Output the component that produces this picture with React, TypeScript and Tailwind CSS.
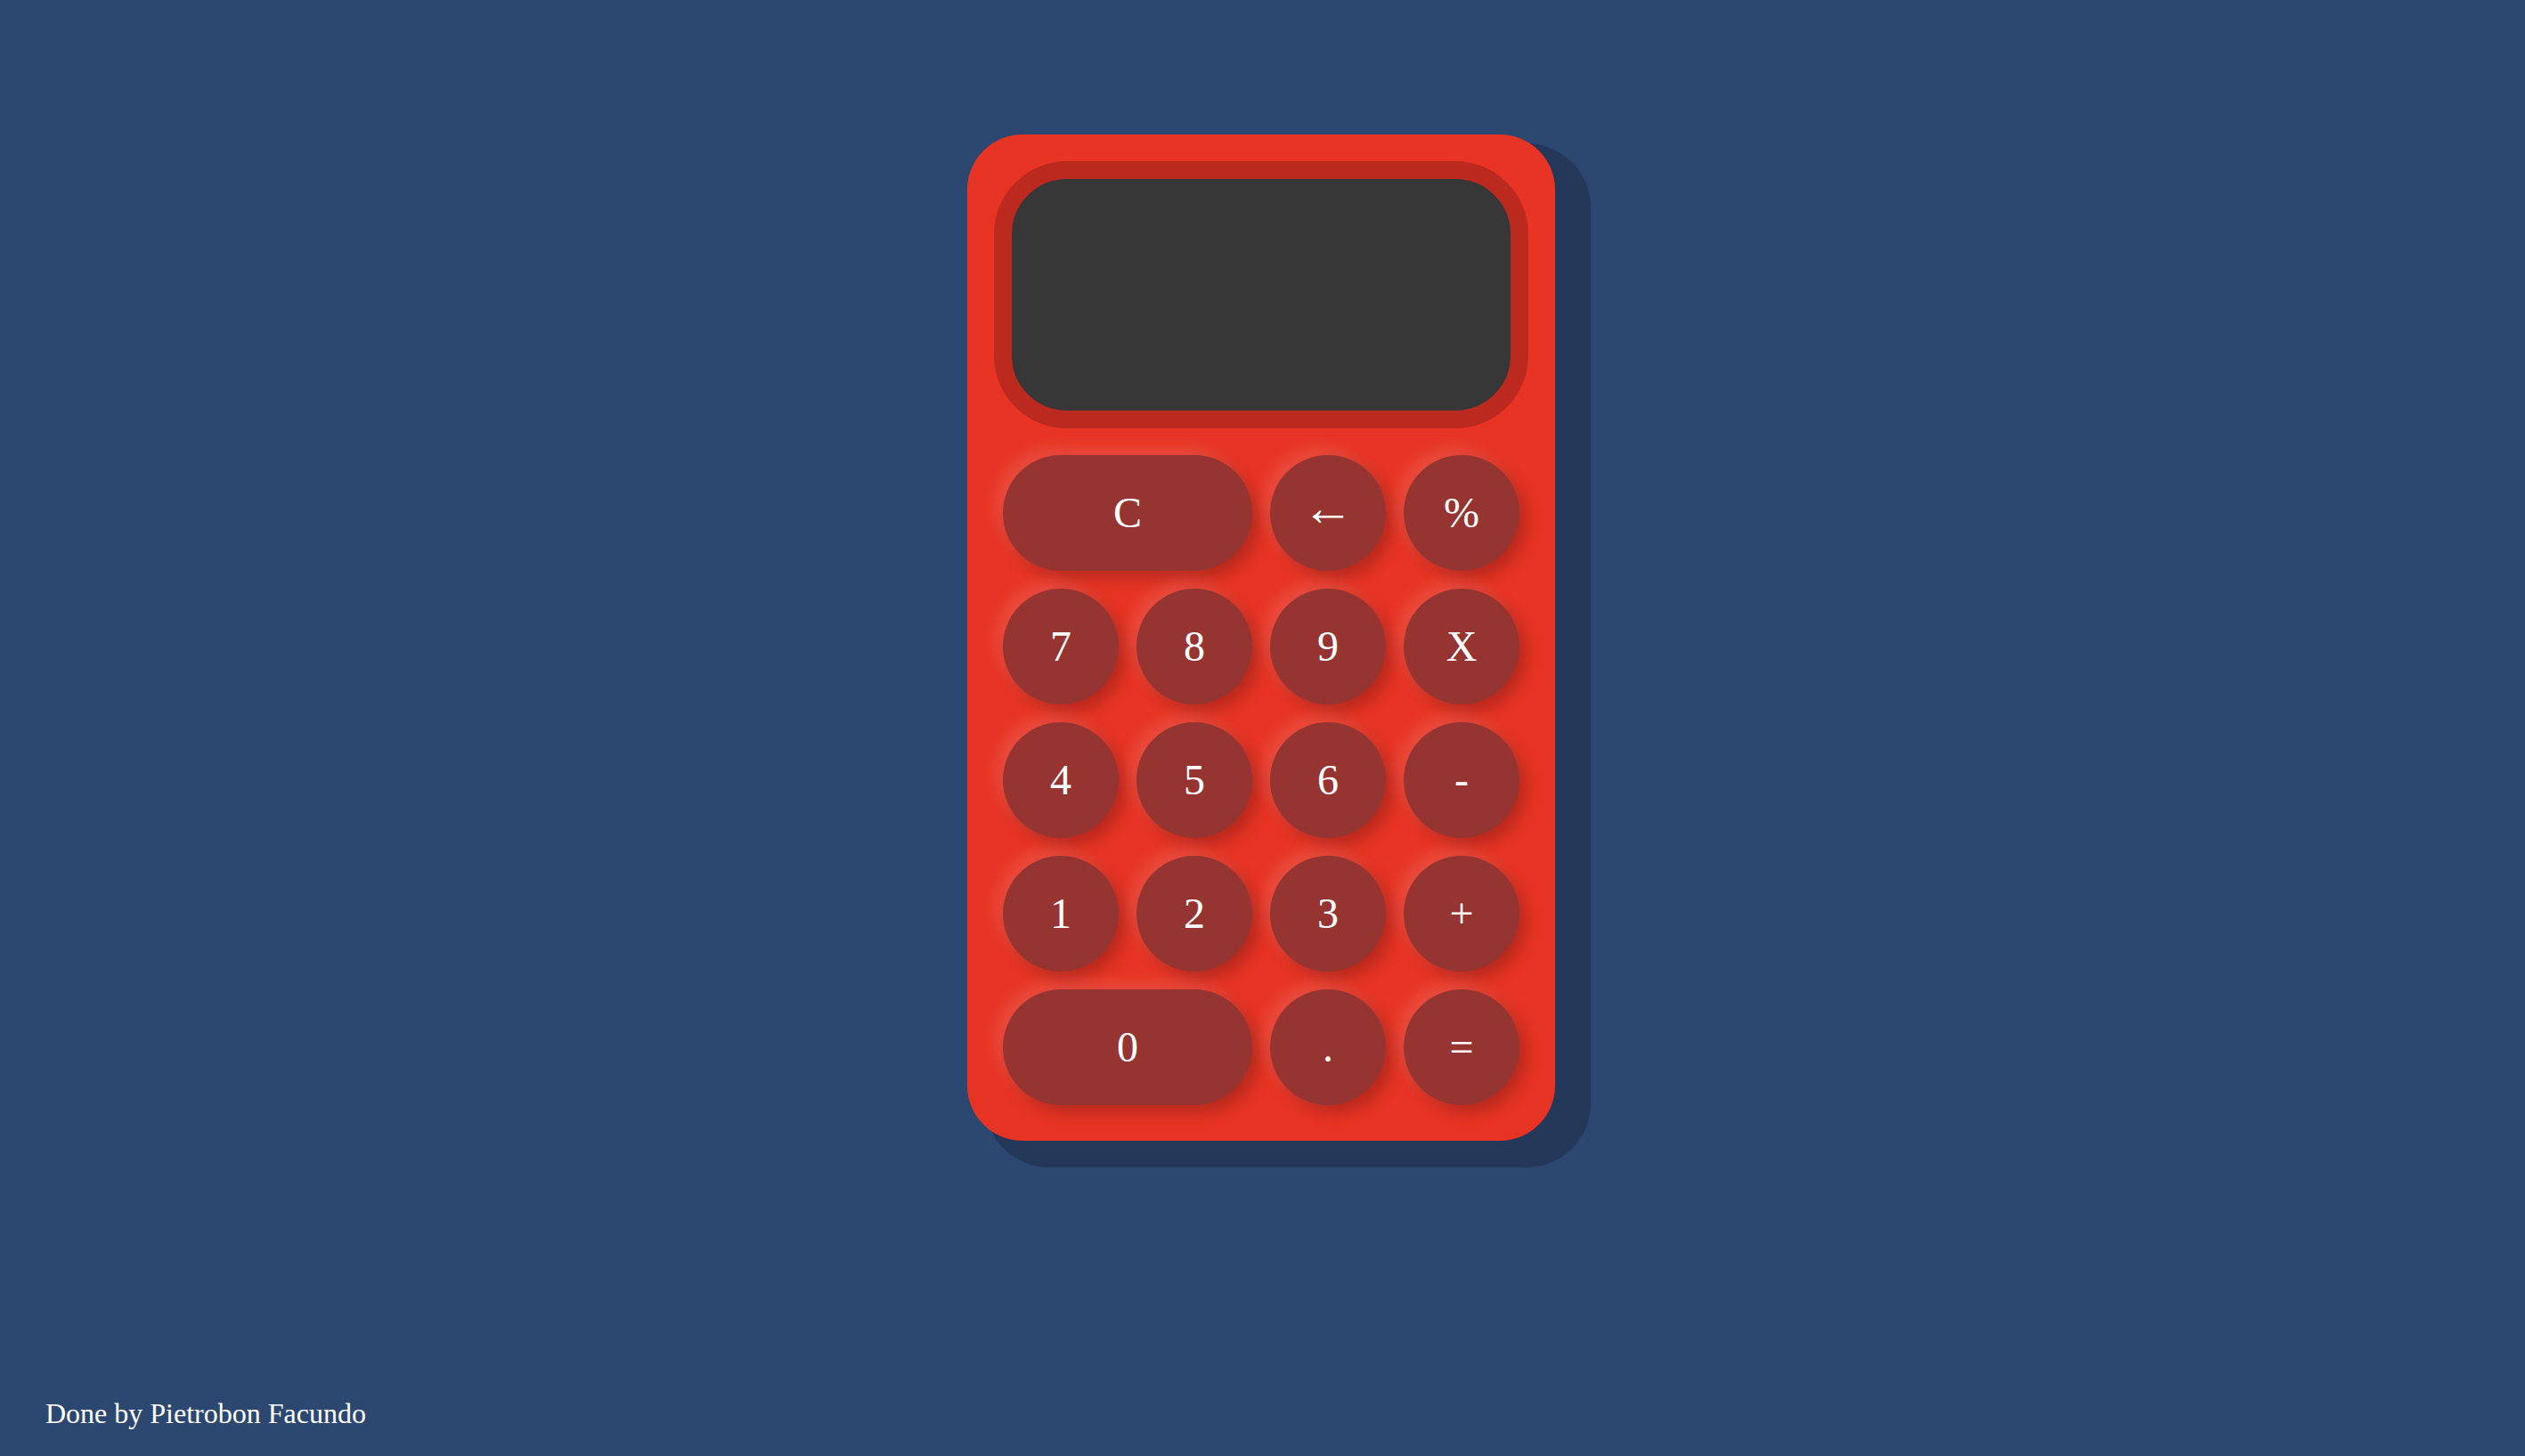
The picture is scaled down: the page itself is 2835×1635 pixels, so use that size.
import React from 'react';

const keys: { label: string; wide?: boolean }[] = [
    { label: 'C', wide: true },
    { label: '←' },
    { label: '%' },
    { label: '7' },
    { label: '8' },
    { label: '9' },
    { label: 'X' },
    { label: '4' },
    { label: '5' },
    { label: '6' },
    { label: '-' },
    { label: '1' },
    { label: '2' },
    { label: '3' },
    { label: '+' },
    { label: '0', wide: true },
    { label: '.' },
    { label: '=' },
];

const App: React.FC = () => {
    return (
        <div className="min-h-screen flex flex-col items-center bg-[#2c4870] font-['Liberation_Serif','Times_New_Roman',serif]">
            {/* Calculator body */}
            <div className="mt-[151px] mr-[3px] w-[660px] rounded-[62px] bg-[#e83424] px-[30px] pt-[30px] pb-[40px] shadow-[30px_20px_0_10px_#243859]">
                {/* Display */}
                <div className="h-[300px] rounded-[82px] border-[20px] border-[#bb291f] bg-[#373737]" />

                {/* Keypad */}
                <div className="mt-[30px] px-[10px] grid grid-cols-[repeat(4,130px)] gap-[20px]">
                    {keys.map((key) => (
                        <button
                            key={key.label}
                            className={`h-[130px] flex items-center justify-center rounded-full bg-[#963431] text-white text-[48px] leading-none shadow-[8px_8px_18px_rgba(0,0,0,0.22),-8px_-8px_18px_rgba(255,255,255,0.13)] ${key.wide ? 'col-span-2' : ''}`}
                        >
                            {key.label === '←' ? (
                                <span className="inline-block text-[58px] -translate-y-[5px]">←</span>
                            ) : (
                                key.label
                            )}
                        </button>
                    ))}
                </div>
            </div>

            {/* Footer */}
            <p className="mt-auto self-start pl-[51px] pb-[30px] text-white text-[32px] leading-[36px]">
                Done by Pietrobon Facundo
            </p>
        </div>
    );
};

export default App;
